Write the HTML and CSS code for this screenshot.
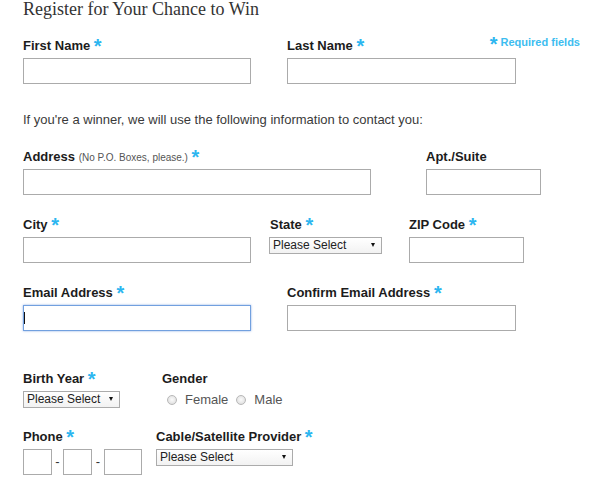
FILE: index.html
```html
<!DOCTYPE html>
<html>
<head>
<meta charset="utf-8">
<link rel="stylesheet" href="styles.css">
</head>
<body>
<div class="page">
  <h1 class="title">Register for Your Chance to Win</h1>

  <div class="row row-top">
    <div class="field c264">
      <label class="lbl">First Name <span class="req">*</span></label>
      <input class="txt w228" type="text">
    </div>
    <div class="field grow">
      <div class="head">
        <label class="lbl">Last Name <span class="req">*</span></label>
        <span class="note"><span class="req-sm">*</span> Required fields</span>
      </div>
      <input class="txt w229" type="text">
    </div>
  </div>

  <p class="intro">If you're a winner, we will use the following information to contact you:</p>

  <div class="row row-addr">
    <div class="field c403">
      <label class="lbl">Address <span class="hint">(No P.O. Boxes, please.)</span> <span class="req">*</span></label>
      <input class="txt w348" type="text">
    </div>
    <div class="field">
      <label class="lbl">Apt./Suite</label>
      <input class="txt w115" type="text">
    </div>
  </div>

  <div class="row">
    <div class="field c246">
      <label class="lbl">City <span class="req">*</span></label>
      <input class="txt w228" type="text">
    </div>
    <div class="field c140">
      <label class="lbl lbl-state">State <span class="req">*</span></label>
      <span class="sel-wrap"><select class="sel w113"><option>Please Select</option></select></span>
    </div>
    <div class="field">
      <label class="lbl">ZIP Code <span class="req">*</span></label>
      <input class="txt w115" type="text">
    </div>
  </div>

  <div class="row">
    <div class="field c264">
      <label class="lbl">Email Address <span class="req">*</span></label>
      <span class="focus-wrap"><input class="txt w228 focused" type="email"></span>
    </div>
    <div class="field">
      <label class="lbl">Confirm Email Address <span class="req">*</span></label>
      <input class="txt w229" type="email">
    </div>
  </div>

  <div class="row row-birth">
    <div class="field c139">
      <label class="lbl">Birth Year <span class="req">*</span></label>
      <span class="sel-wrap"><select class="sel w97"><option>Please Select</option></select></span>
    </div>
    <div class="field">
      <label class="lbl">Gender</label>
      <div class="opts">
        <input class="radio" type="radio" name="g"><span class="opt">Female</span>
        <input class="radio" type="radio" name="g"><span class="opt">Male</span>
      </div>
    </div>
  </div>

  <div class="row row-phone">
    <div class="field c133">
      <label class="lbl">Phone <span class="req">*</span></label>
      <div class="phone">
        <input class="txt w29" type="text"><span class="dash d11">-</span><input class="txt w29" type="text"><span class="dash d12">-</span><input class="txt w38" type="text">
      </div>
    </div>
    <div class="field">
      <label class="lbl">Cable/Satellite Provider <span class="req">*</span></label>
      <span class="sel-wrap"><select class="sel w137"><option>Please Select</option></select></span>
    </div>
  </div>
</div>
</body>
</html>
```

FILE: styles.css
```css
body {
  margin: 0;
  background: #fff;
  font-family: "Liberation Sans", Arial, sans-serif;
  color: #1c1c1c;
}

.page {
  padding-left: 23px;
  width: 557px;
}

.title {
  margin: 0;
  font-family: "Liberation Serif", "Times New Roman", serif;
  font-weight: normal;
  font-size: 18px;
  line-height: 18px;
  color: #333;
}

.row {
  display: flex;
  margin-top: 21px;
}
.row-top { margin-top: 19px; }
.row-addr { margin-top: 20px; }
.row-birth { margin-top: 39px; }
.row-phone { margin-top: 20px; }

.field {
  display: flex;
  flex-direction: column;
  align-items: flex-start;
}
.grow { flex: 1; }
.c264 { width: 264px; }
.c403 { width: 403px; }
.c246 { width: 246px; }
.c140 { width: 140px; }
.c139 { width: 139px; }
.c133 { width: 133px; }

.head {
  align-self: stretch;
  display: flex;
  justify-content: space-between;
  align-items: flex-start;
}

.lbl {
  display: block;
  height: 16px;
  padding-top: 1px;
  font-weight: bold;
  font-size: 13px;
  line-height: 16px;
  white-space: nowrap;
}
.lbl-state { padding-left: 1px; }

.req {
  color: #2cb6f0;
  font-size: 20px;
  line-height: 0;
  vertical-align: -3px;
}

.hint {
  font-weight: normal;
  font-size: 10px;
  color: #555;
}

.note {
  font-weight: bold;
  font-size: 11px;
  line-height: 11px;
  color: #3dbdf0;
  white-space: nowrap;
}
.req-sm {
  font-size: 20px;
  line-height: 0;
  vertical-align: -5px;
  color: #2cb6f0;
}

.intro {
  margin: 28px 0 0;
  font-size: 13px;
  line-height: 16px;
  color: #3a3a3a;
}

.txt {
  box-sizing: border-box;
  display: block;
  height: 26px;
  margin: 4px 0 0;
  padding: 0 3px;
  border: 1px solid #ababab;
  border-radius: 0;
  background: #fff;
  font-family: "Liberation Sans", Arial, sans-serif;
  font-size: 13px;
  outline: none;
}
.w228 { width: 228px; }
.w229 { width: 229px; }
.w348 { width: 348px; }
.w115 { width: 115px; }
.w29 { width: 29px; }
.w38 { width: 38px; }
.w113 { width: 113px; }
.w97 { width: 97px; }
.w137 { width: 137px; }

.focus-wrap {
  position: relative;
  display: block;
}
.focused {
  border-color: #72a0df;
  box-shadow: 0 0 2px rgba(90, 140, 220, 0.7);
}
.focus-wrap::after {
  content: "";
  position: absolute;
  left: 1px;
  top: 11px;
  width: 1px;
  height: 12px;
  background: #111;
}

.sel-wrap {
  position: relative;
  display: block;
  margin-top: 4px;
}
.sel {
  -webkit-appearance: none;
  appearance: none;
  box-sizing: border-box;
  display: block;
  height: 17px;
  margin: 0;
  padding: 0 0 0 3px;
  border: 1px solid #ababab;
  border-radius: 0;
  background: linear-gradient(#ffffff, #f2f2f2);
  font-family: "Liberation Sans", Arial, sans-serif;
  font-size: 12px;
  line-height: 15px;
  color: #222;
  outline: none;
}
.sel-wrap::after {
  content: "";
  position: absolute;
  right: 7px;
  top: 6px;
  border-left: 2.5px solid transparent;
  border-right: 2.5px solid transparent;
  border-top: 4px solid #111;
}

.opts {
  display: flex;
  align-items: center;
  margin-top: 5px;
  padding-left: 5px;
  font-size: 13px;
  line-height: 16px;
  color: #555;
}
.radio {
  -webkit-appearance: none;
  appearance: none;
  box-sizing: border-box;
  width: 10px;
  height: 10px;
  margin: 0 8px 0 0;
  border: 1px solid #b8b8b8;
  border-radius: 50%;
  background: radial-gradient(circle at 50% 45%, #fbfbfb 0%, #e6e6e6 60%, #d4d4d4 100%);
}
.opt { margin-right: 8px; }

.phone {
  display: flex;
  align-items: center;
}
.dash {
  margin-top: 4px;
  font-size: 13px;
  line-height: 16px;
  text-align: center;
  color: #333;
}
.d11 { width: 11px; }
.d12 { width: 12px; }
```
